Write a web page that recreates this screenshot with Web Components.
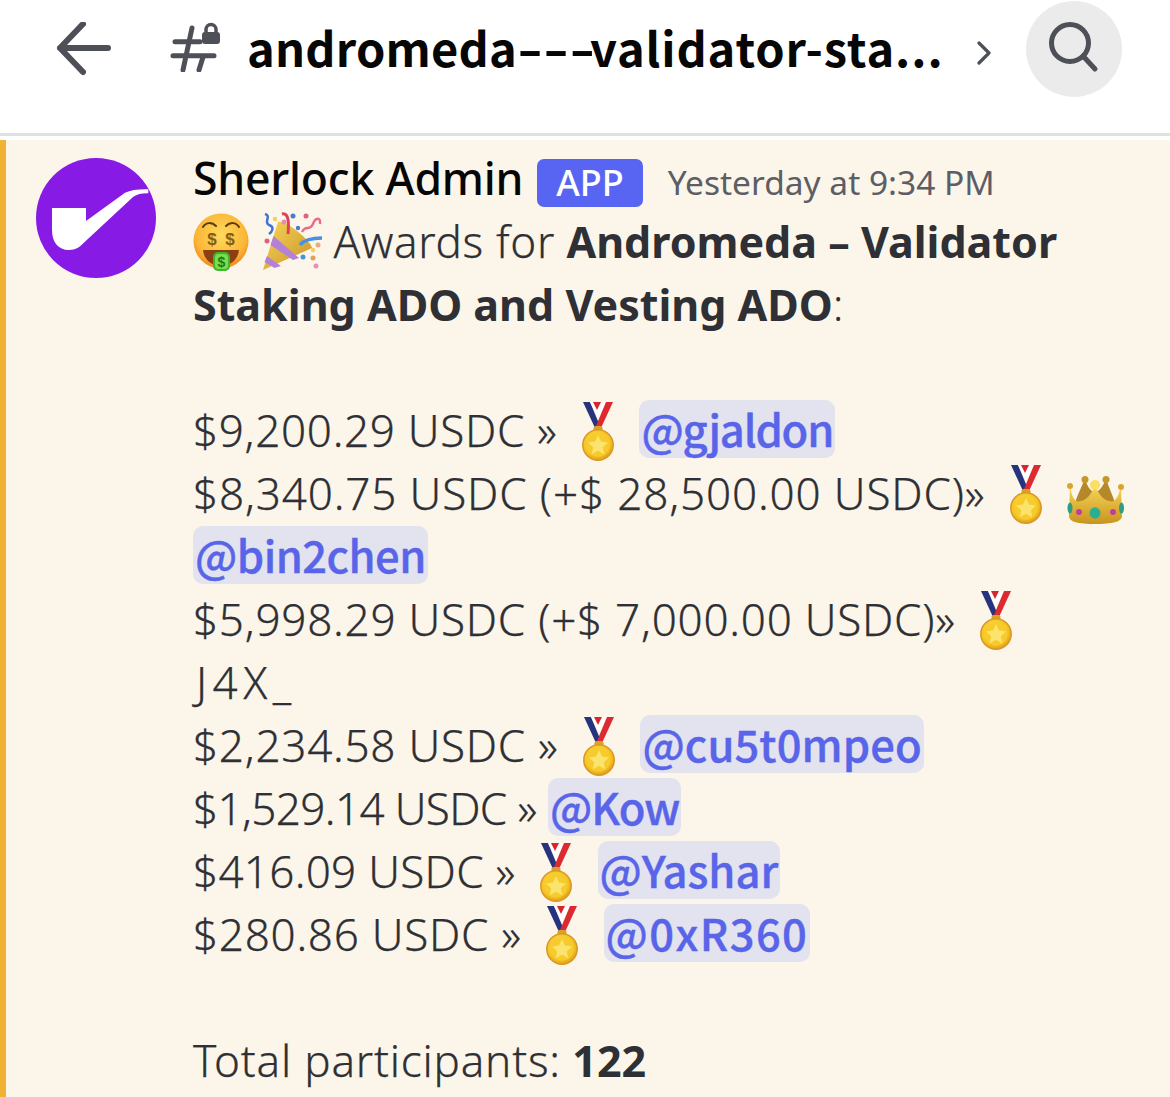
<!DOCTYPE html>
<html>
<head>
<meta charset="utf-8">
<style>
  html, body { margin: 0; padding: 0; background: #fff; overflow: hidden; height: 1097px; }
  body { font-family: "Noto Sans", sans-serif; }
</style>
</head>
<body>
<channel-header></channel-header>
<chat-message author="Sherlock Admin" time="Yesterday at 9:34 PM">
  <money-emoji></money-emoji><party-emoji></party-emoji> <pay-out style="letter-spacing:.7px">Awards for</pay-out> <b>Andromeda – Validator<br>Staking ADO and Vesting ADO</b>:<br>
  <br>
  <pay-out style="letter-spacing:.68px">$9,200.29 USDC »</pay-out> <medal-emoji></medal-emoji> <user-mention style="letter-spacing:-1.2px">@gjaldon</user-mention><br>
  <pay-out style="letter-spacing:.86px">$8,340.75 USDC (+$ 28,500.00 USDC)»</pay-out> <medal-emoji></medal-emoji> <crown-emoji></crown-emoji><br>
  <user-mention style="letter-spacing:-.5px">@bin2chen</user-mention><br>
  <pay-out style="letter-spacing:.75px">$5,998.29 USDC (+$ 7,000.00 USDC)»</pay-out> <medal-emoji></medal-emoji><br>
  <pay-out style="letter-spacing:5.500px;padding-left:3px">J4X_</pay-out><br>
  <pay-out style="letter-spacing:.74px">$2,234.58 USDC »</pay-out> <medal-emoji></medal-emoji> <user-mention style="letter-spacing:.1px">@cu5t0mpeo</user-mention><br>
  <pay-out style="letter-spacing:-.63px">$1,529.14 USDC »</pay-out> <user-mention style="letter-spacing:-1px">@Kow</user-mention><br>
  <pay-out style="letter-spacing:.29px">$416.09 USDC »</pay-out> <medal-emoji></medal-emoji> <user-mention>@Yashar</user-mention><br>
  <pay-out style="letter-spacing:.72px">$280.86 USDC »</pay-out> <medal-emoji></medal-emoji> <user-mention style="letter-spacing:1.400px">@0xR360</user-mention><br>
  <br>
  <pay-out style="letter-spacing:.8px">Total participants:</pay-out> <b>122</b>
</chat-message>

<script>
class ChannelHeader extends HTMLElement {
  constructor() {
    super();
    this.attachShadow({ mode: "open" });
  }

  static get styles() {
    return /* css */`
      :host {
        display: block;
        height: 133px;
        border-bottom: 3px solid #e1e1e5;
        margin-bottom: 4px;
      }
      .bar {
        display: flex;
        align-items: flex-start;
        height: 100%;
        padding: 1px 0 0 56px;
        box-sizing: border-box;
      }
      .back { margin-top: 21px; width: 56px; height: 54px; flex: none; }
      .hash { margin: 19px 0 0 58px; width: 52px; height: 52px; flex: none; }
      .title {
        margin: 10px 0 0 25px;
        width: 728px;
        flex: none;
        font: 700 47px/72px "Noto Sans CJK SC", "Noto Sans", sans-serif;
        letter-spacing: 0.2px;
        color: #060607;
        white-space: nowrap;
      }
      .dash {
        display: inline-block;
        width: 73px;
        transform: scaleX(1.500);
        transform-origin: left center;
        letter-spacing: 0;
      }
      .rest { letter-spacing: 0.9px; }
      .chevron { margin: 40px 0 0 1px; width: 16px; height: 24px; flex: none; }
      .search {
        margin-left: 34px;
        width: 96px;
        height: 96px;
        flex: none;
        border-radius: 50%;
        background: #ebebeb;
      }
      svg { display: block; }
    `;
  }

  connectedCallback() {
    this.shadowRoot.innerHTML = /* html */`
    <style>${ChannelHeader.styles}</style>
    <div class="bar">
      <svg class="back" viewBox="0 0 56 54" fill="none" stroke="#4e5058" stroke-width="6" stroke-linecap="round" stroke-linejoin="round">
        <path d="M4 26H52M27 2 4 26 27 50"/>
      </svg>
      <svg class="hash" viewBox="0 0 52 52" fill="none" stroke="#4e5058" stroke-width="5" stroke-linecap="round">
        <path d="M5 21.700H30M3 35.700H44"/>
        <path d="M22 8 13 50M33 37 29 50"/>
        <rect x="32" y="12" width="18" height="12" rx="3" fill="#4e5058" stroke="none"/>
        <path d="M36 13V9.500a5 5 0 0 1 10 0V13" stroke-width="3.500"/>
      </svg>
      <div class="title">andromeda<span class="dash">---</span><span class="rest">validator-sta...</span></div>
      <svg class="chevron" viewBox="0 0 16 24" fill="none" stroke="#4e5058" stroke-width="3.200" stroke-linecap="round" stroke-linejoin="round">
        <path d="M3 2 13 12 3 22"/>
      </svg>
      <div class="search">
        <svg width="96" height="96" viewBox="0 0 96 96" fill="none" stroke="#4e5058" stroke-width="5" stroke-linecap="round">
          <circle cx="44" cy="42" r="18.500"/>
          <path d="M57 55 69 68"/>
        </svg>
      </div>
    </div>`;
  }
}

class ChatMessage extends HTMLElement {
  constructor() {
    super();
    this.attachShadow({ mode: "open" });
  }

  static get styles() {
    return /* css */`
      :host {
        display: block;
        background: #fcf5e9;
        border-left: 6px solid #f0b232;
        height: 957px;
        color: #2e3035;
      }
      .row {
        display: flex;
        gap: 37px;
        padding: 18px 0 0 30px;
      }
      .avatar { flex: none; width: 120px; height: 120px; display: block; }
      .name-line {
        display: flex;
        align-items: center;
        height: 44px;
        margin-top: -2px;
      }
      .author { font: 500 44.500px/44px "Noto Sans", sans-serif; color: #060607; letter-spacing: -0.2px; }
      .tag {
        margin-left: 14px;
        background: #5865f2;
        color: #fff;
        border-radius: 7px;
        font: 500 36px/48px "Noto Sans", sans-serif;
        padding: 0 19px;
        height: 48px;
        transform: translateY(5px);
      }
      .time { margin-left: 25px; font: 400 33.500px/44px "Noto Sans", sans-serif; color: #5c5e66; transform: translateY(4px); }
      .body {
        font: 300 44px/63px "Noto Sans", sans-serif;
        white-space: nowrap;
        padding-top: 10px;
      }
      ::slotted(b) { font-size: 43px; font-weight: 700; }
    `;
  }

  connectedCallback() {
    this.shadowRoot.innerHTML = /* html */`
    <style>${ChatMessage.styles}</style>
    <div class="row">
      <svg class="avatar" viewBox="0 0 120 120">
        <circle cx="60" cy="60" r="60" fill="#881ae6"/>
        <path fill="#fff" d="M16 50H50V63L89 34.700Q97 31 112.300 31.300L112.300 35.300Q103 35 97.300 38.700L47.300 85.300C44 89 40 92 33 92 22 92 16 84 16 72Z"/>
      </svg>
      <div>
        <div class="name-line">
          <span class="author">${this.getAttribute("author")}</span>
          <span class="tag">APP</span>
          <span class="time">${this.getAttribute("time")}</span>
        </div>
        <div class="body"><slot></slot></div>
      </div>
    </div>`;
  }
}

class PayOut extends HTMLElement {
  constructor() {
    super();
    this.attachShadow({ mode: "open" });
    this.shadowRoot.innerHTML = `<style>:host { display: inline; -webkit-text-stroke: 0.25px currentColor; }</style><slot></slot>`;
  }
}

class UserMention extends HTMLElement {
  constructor() {
    super();
    this.attachShadow({ mode: "open" });
    this.shadowRoot.innerHTML = /* html */`
    <style>
      :host {
        display: inline-block;
        background: #e3e2ef;
        color: #5865e8;
        font: 500 43.500px/58px "Noto Sans CJK SC", "Noto Sans", sans-serif;
        -webkit-text-stroke: 0.4px currentColor;
        border-radius: 10px;
        margin: -4px 0;
        padding: 0 2px;
      }
    </style>
    <slot></slot>`;
  }
}

class EmojiBase extends HTMLElement {
  constructor() {
    super();
    this.attachShadow({ mode: "open" });
  }

  connectedCallback() {
    const { w, h, ml, mr, va, svg } = this.constructor.art;
    this.shadowRoot.innerHTML = /* html */`
    <style>
      :host { display: inline-block; vertical-align: ${va}px; margin: -14px ${mr}px -14px ${ml}px; line-height: 0; }
      svg { display: block; width: ${w}px; height: ${h}px; }
    </style>
    ${svg}`;
  }
}

class MedalEmoji extends EmojiBase {
  static art = {
    w: 32, h: 59, ml: 13, mr: 14, va: 0, svg: /* html */`
    <svg viewBox="0 0 32 59">
      <defs>
        <radialGradient id="g" cx="45%" cy="40%" r="65%"><stop offset="0" stop-color="#ffe65a"/><stop offset="0.7" stop-color="#f4c21f"/><stop offset="1" stop-color="#d9951a"/></radialGradient>
      </defs>
      <path d="M1 0H8L18 24 13 26Z" fill="#26337f"/>
      <path d="M8 0H24L16 16Z" fill="#fff"/>
      <path d="M11 0H19L15 8Z" fill="#d8262c"/>
      <path d="M24 0H31L19 26 14 24Z" fill="#dc2b30"/>
      <rect x="11.500" y="24" width="9" height="7" rx="2" fill="#d9a126"/>
      <circle cx="16" cy="43" r="15.200" fill="url(#g)" stroke="#d8982a" stroke-width="1.500"/>
      <circle cx="16" cy="43" r="11.500" fill="#f7cb2c"/>
      <path d="M16 33 19 39.600 26 40.400 20.800 45.300 22.200 52.300 16 48.800 9.800 52.300 11.200 45.300 6 40.400 13 39.600Z" fill="#fbe46e"/>
    </svg>`
  };
}

class CrownEmoji extends EmojiBase {
  static art = {
    w: 58, h: 50, ml: 0, mr: 0, va: -2, svg: /* html */`
    <svg viewBox="0 0 58 50">
      <defs>
        <linearGradient id="c" x1="0" y1="0" x2="0" y2="1"><stop offset="0" stop-color="#f6d558"/><stop offset="1" stop-color="#c9941f"/></linearGradient>
      </defs>
      <path d="M18 3C14 12 10 20 8 27H48C46 20 42 12 39 3 36 10 32 16 28 16 24 16 20 10 18 3Z" fill="#b5892a"/>
      <path d="M3 10C5 22 8 27 14 25 20 24 24 18 28 10 32 18 36 24 42 25 48 27 51 22 54 10L55 40C55 46 45 48 28 48 11 48 2 46 2 40Z" fill="url(#c)"/>
      <circle cx="3" cy="10" r="3" fill="#d9a62c"/><circle cx="54" cy="11" r="3" fill="#d9a62c"/>
      <circle cx="18" cy="3.500" r="3.500" fill="#c5962a"/><circle cx="39" cy="3.500" r="3.500" fill="#c5962a"/><circle cx="28" cy="9" r="5" fill="#f9e063"/>
      <ellipse cx="3" cy="32" rx="2.500" ry="5.500" fill="#2f9c84"/><ellipse cx="54.500" cy="32" rx="2.500" ry="5.500" fill="#2f9c84"/>
      <circle cx="12" cy="36" r="3" fill="#c23d9c"/><circle cx="46" cy="36" r="3" fill="#c23d9c"/>
      <ellipse cx="28" cy="37" rx="5.500" ry="5.800" fill="#2cae92"/>
    </svg>`
  };
}

class MoneyEmoji extends EmojiBase {
  static art = {
    w: 57, h: 58, ml: 0, mr: 0, va: 1, svg: /* html */`
    <svg viewBox="0 0 57 58">
      <defs>
        <radialGradient id="f" cx="50%" cy="40%" r="60%"><stop offset="0" stop-color="#ffdb5e"/><stop offset="0.75" stop-color="#fbb636"/><stop offset="1" stop-color="#ee8a1d"/></radialGradient>
      </defs>
      <circle cx="28" cy="28" r="27.500" fill="url(#f)"/>
      <path d="M10 14C13 9 19 9 23 13M33 13C37 9 43 9 46 14" fill="none" stroke="#5b3a12" stroke-width="2" stroke-linecap="round"/>
      <text x="19" y="32" font-family="'Liberation Sans',sans-serif" font-size="17" font-weight="700" text-anchor="middle" fill="#8a5a10">$</text>
      <text x="37" y="32" font-family="'Liberation Sans',sans-serif" font-size="17" font-weight="700" text-anchor="middle" fill="#8a5a10">$</text>
      <path d="M10 37H46C45 47 37 53 28 53 19 53 11 47 10 37Z" fill="#8b3f14"/>
      <rect x="20" y="39" width="17" height="19" rx="5" fill="#3fb52a"/>
      <rect x="22" y="41" width="13" height="15" rx="3.500" fill="#78de4c"/>
      <text x="28.500" y="54" font-family="'Liberation Sans',sans-serif" font-size="14" font-weight="700" text-anchor="middle" fill="#1f7a1a">$</text>
    </svg>`
  };
}

class PartyEmoji extends EmojiBase {
  static art = {
    w: 60, h: 60, ml: 12, mr: 0, va: 0, svg: /* html */`
    <svg viewBox="0 0 60 60">
      <defs>
        <linearGradient id="p" x1="0" y1="0" x2="1" y2="1"><stop offset="0" stop-color="#f8d658"/><stop offset="1" stop-color="#c8932a"/></linearGradient>
      </defs>
      <path d="M1 58 16 10C24 8 48 28 50 36Z" fill="url(#p)"/>
      <path d="M11.500 24 37 46 31 48 8.500 33ZM5 44 19 54 12.500 56 2.500 50Z" fill="#b580d8"/>
      <path d="M3 2C10 4 1 10 7 13 13 15 10 20 7 22" fill="none" stroke="#3f74d6" stroke-width="2.500"/>
      <path d="M20 2C27 0 27 12 26 22" fill="none" stroke="#e0405a" stroke-width="3"/>
      <path d="M40 20C44 12 47 20 51 12 53 6 59 4 58 12" fill="none" stroke="#ee6a8c" stroke-width="2.500"/>
      <path d="M38 33C42 28 50 26 60 26" fill="none" stroke="#4a90e2" stroke-width="3.500"/>
      <circle cx="13" cy="7" r="2.200" fill="#f3d05a"/><circle cx="22" cy="10" r="2.500" fill="#e98ab0"/><circle cx="31" cy="4" r="2.500" fill="#4a78d8"/><circle cx="44" cy="4" r="2.500" fill="#e06080"/>
      <circle cx="36" cy="16" r="2.200" fill="#4a78d8"/><circle cx="5" cy="29" r="2.500" fill="#e06080"/><circle cx="41" cy="45" r="2.500" fill="#4a90e2"/>
      <circle cx="51" cy="38" r="2.200" fill="#f3d05a"/><circle cx="56" cy="33" r="2.500" fill="#e0b080"/><circle cx="51" cy="46" r="2.500" fill="#e0a060"/><circle cx="54" cy="54" r="2.500" fill="#e890b8"/>
    </svg>`
  };
}

customElements.define("channel-header", ChannelHeader);
customElements.define("chat-message", ChatMessage);
customElements.define("pay-out", PayOut);
customElements.define("user-mention", UserMention);
customElements.define("medal-emoji", MedalEmoji);
customElements.define("crown-emoji", CrownEmoji);
customElements.define("money-emoji", MoneyEmoji);
customElements.define("party-emoji", PartyEmoji);
</script>
</body>
</html>
